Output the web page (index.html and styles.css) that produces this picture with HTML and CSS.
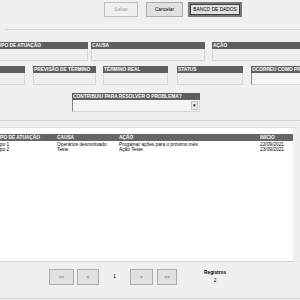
FILE: index.html
```html
<!DOCTYPE html>
<html lang="pt-BR">
<head>
<meta charset="UTF-8">
<title>Ações</title>
<link rel="stylesheet" href="styles.css">
</head>
<body>

<div id="window">
  <div id="toolbar">
    <button class="btn" disabled>Salvar</button>
    <button class="btn">Cancelar</button>
    <button class="btn focused">BANCO DE DADOS</button>
  </div>

  <div id="form">
    <div class="row row1">
      <div class="field w-tipo"><div class="label">TIPO DE ATUAÇÃO</div><div class="box"></div></div>
      <div class="field w-causa"><div class="label">CAUSA</div><div class="box"></div></div>
      <div class="field w-acao"><div class="label">AÇÃO</div><div class="box"></div></div>
    </div>
    <div class="row row2">
      <div class="field w-resp"><div class="label">RESPONSÁVEL</div><div class="box"></div></div>
      <div class="field w-prev"><div class="label">PREVISÃO DE TÉRMINO</div><div class="box"></div></div>
      <div class="field w-real"><div class="label">TÉRMINO REAL</div><div class="box"></div></div>
      <div class="field w-status"><div class="label">STATUS</div><div class="box"></div></div>
      <div class="field w-ocorreu"><div class="label">OCORREU COMO PREVISTO?</div><div class="box combo"></div></div>
    </div>
    <div class="row row3">
      <div class="field w-contrib">
        <div class="label">CONTRIBUIU PARA RESOLVER O PROBLEMA?</div>
        <div class="box combo"><span class="arrow">&#9662;</span></div>
      </div>
    </div>
  </div>

  <div id="grid">
    <div class="grid-row head">
      <span class="c1">TIPO DE ATUAÇÃO</span>
      <span class="c2">CAUSA</span>
      <span class="c3">AÇÃO</span>
      <span class="c4">INÍCIO</span>
    </div>
    <div class="grid-row">
      <span class="c1">Tipo 1</span>
      <span class="c2">Operários desmotivado</span>
      <span class="c3">Progamar ações para o próximo mês</span>
      <span class="c4">22/09/2021</span>
    </div>
    <div class="grid-row">
      <span class="c1">Tipo 2</span>
      <span class="c2">Teste</span>
      <span class="c3">Ação Teste</span>
      <span class="c4">23/09/2021</span>
    </div>
  </div>

  <div id="pager">
    <button class="btn nav w-first">&lt;&lt;</button>
    <button class="btn nav w-prevpg">&lt;</button>
    <span class="page">1</span>
    <button class="btn nav w-next">&gt;</button>
    <button class="btn nav w-last">&gt;&gt;</button>
    <div class="registros">
      <b>Registros</b>
      <span>2</span>
    </div>
  </div>
</div>

</body>
</html>
```

FILE: styles.css
```css
html, body {
  margin: 0;
  padding: 0;
}
body {
  width: 300px;
  height: 300px;
  overflow: hidden;
  background-color: #f0f0f0;
  font-family: "Liberation Sans", Arial, sans-serif;
  font-size: 4.8px;
  color: #000;
}
#window {
  width: 300px;
  height: 300px;
  display: flex;
  flex-direction: column;
}
#window > div {
  flex: none;
}

/* botões */
.btn {
  font-family: inherit;
  font-size: 4.8px;
  background-color: #e1e1e1;
  border: 1px solid #adadad;
  padding: 0;
  margin: 0;
  color: #000;
}
.btn:disabled {
  color: #a0a0a0;
  border-color: #bfbfbf;
  background-color: #f0f0f0;
}
.btn.focused {
  border: 2px solid #7a7a7a;
  outline: 1px solid #3c3c3c;
  outline-offset: -3px;
}

#toolbar {
  height: 30px;
  box-sizing: border-box;
  padding: 2px 0 0 104px;
  display: flex;
  align-items: flex-start;
  gap: 8px;
  border-bottom: 1px solid #d5d5d5;
  margin-left: 5px;
}
#toolbar .btn {
  height: 15px;
}
#toolbar .btn:nth-child(1) { width: 34px; margin-left: -5px; }
#toolbar .btn:nth-child(2) { width: 37px; }
#toolbar .btn:nth-child(3) { width: 54px; margin-left: -3px; }

/* formulário */
#form {
  height: 91px;
  box-sizing: border-box;
  padding-top: 12px;
  border-bottom: 1px solid #d5d5d5;
}
.row {
  display: flex;
}
.row1 { margin-left: -4px; }
.row2 { margin-left: -40px; margin-top: 5px; }
.row3 { margin-left: 72px; margin-top: 8px; }

.field {
  flex: none;
}
.label {
  height: 7px;
  line-height: 7px;
  background-color: #5f5f5f;
  color: #fff;
  font-weight: bold;
  white-space: nowrap;
  overflow: hidden;
  padding-left: 1px;
}
.box {
  height: 12px;
  box-sizing: border-box;
  border: 1px solid #d8d8d8;
  border-top: none;
  background-color: #f0f0f0;
}
.box.combo {
  border-left-color: #8a8a8a;
  background-color: #f4f4f4;
  position: relative;
}
.arrow {
  position: absolute;
  right: 1px;
  top: 1px;
  width: 7px;
  height: 9px;
  background-color: #e8e8e8;
  border: 1px solid #c4c4c4;
  box-sizing: border-box;
  font-size: 5px;
  line-height: 7px;
  text-align: center;
}

.w-tipo { width: 92px; }
.w-causa { width: 114px; margin-left: 3px; }
.w-acao { width: 100px; margin-left: 7px; }

.w-resp { width: 65px; }
.w-prev { width: 63px; margin-left: 8px; }
.w-real { width: 65px; margin-left: 7px; }
.w-status { width: 66px; margin-left: 9px; }
.w-ocorreu { width: 80px; margin-left: 8px; }

.w-contrib { width: 128px; }

/* grade */
#grid {
  height: 135px;
  box-sizing: border-box;
  margin-top: 6px;
  padding-top: 6px;
  background-color: #fff;
  border-top: 1px solid #dadada;
  border-right: 7px solid #f0f0f0;
  border-bottom: 1px solid #d5d5d5;
}
.grid-row {
  display: grid;
  grid-template-columns: 61px 62px 141px 40px;
  margin-left: -4px;
  height: 5px;
  line-height: 5px;
  white-space: nowrap;
}
.grid-row span {
  overflow: hidden;
}
.grid-row.head {
  height: 7px;
  line-height: 7px;
  margin-bottom: 1px;
  background-color: #666;
  color: #fff;
  font-weight: bold;
}

/* paginação */
#pager {
  height: 37px;
  box-sizing: border-box;
  border-bottom: 1px solid #d5d5d5;
  display: flex;
  align-items: flex-start;
  padding: 7px 0 0 49px;
}
.nav {
  height: 16px;
  color: #555;
}
.w-first { width: 25px; }
.w-prevpg { width: 22px; margin-left: 3px; }
.page { width: 31px; text-align: center; line-height: 16px; }
.w-next { width: 23px; }
.w-last { width: 20px; margin-left: 4px; }
.registros {
  margin-left: 27px;
  display: flex;
  flex-direction: column;
  align-items: center;
  padding-top: 1px;
  gap: 3px;
}
```
